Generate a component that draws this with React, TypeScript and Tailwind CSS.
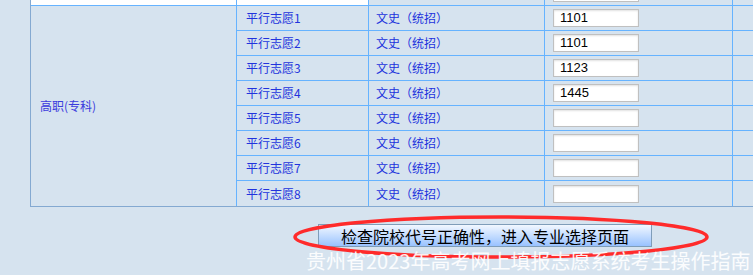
import React from "react";

const rows = [
  { name: "平行志愿1", value: "1101" },
  { name: "平行志愿2", value: "1101" },
  { name: "平行志愿3", value: "1123" },
  { name: "平行志愿4", value: "1445" },
  { name: "平行志愿5", value: "" },
  { name: "平行志愿6", value: "" },
  { name: "平行志愿7", value: "" },
  { name: "平行志愿8", value: "" },
];

const line = "border-[#66b3ff]";
const linkCls = "text-[12px] text-[#2233dd]";

export default function App() {
  return (
    <div className="relative w-[753px] h-[275px] overflow-hidden bg-[#d6e3ef] font-['Noto_Sans_CJK_SC',sans-serif]">
      <div className="ml-[30px] w-[760px] border-l border-[#84a9d1]">
        {/* tail of the previous row */}
        <div className={`flex h-[6px] border-b ${line}`}>
          <div className={`w-[206px] bg-white border-r ${line}`} />
          <div className={`w-[132px] bg-white border-r ${line}`} />
          <div className={`w-[176px] border-r ${line}`} />
          <div className={`w-[188px] pl-[8px] border-r ${line}`}>
            <div className="w-[86px] h-[2px] bg-white border-x border-b border-[#c0c0c0]" />
          </div>
          <div className="flex-1" />
        </div>

        <div className="flex border-b border-[#84a9d1]">
          <div className={`w-[206px] shrink-0 flex items-center pl-[9px] border-r ${line}`}>
            <span className="text-[12px] text-[#3b3bdd]">高职(专科)</span>
          </div>
          <div className="flex-1 flex flex-col">
            {rows.map((r, i) => (
              <div key={r.name} className={`flex h-[25px] ${i < rows.length - 1 ? `border-b ${line}` : "h-[24px]"}`}>
                <div className={`w-[132px] flex items-center pl-[9px] border-r ${line}`}>
                  <span className={linkCls}>{r.name}</span>
                </div>
                <div className={`w-[176px] flex items-center pl-[7px] border-r ${line}`}>
                  <span className={linkCls}>文史（统招）</span>
                </div>
                <div className={`w-[188px] flex items-center pl-[8px] border-r ${line}`}>
                  <input
                    defaultValue={r.value}
                    className="w-[86px] h-[18px] bg-white border border-[#c0c0c0] shadow-[inset_0_1px_2px_rgba(0,0,0,0.12)] px-[6px] text-[13px] text-black font-['Liberation_Sans',sans-serif] outline-none"
                  />
                </div>
                <div className="flex-1" />
              </div>
            ))}
          </div>
        </div>
      </div>

      <button className="mt-[17px] ml-[318px] w-[334px] h-[23px] border border-[#7f9db9] bg-gradient-to-b from-[#f2f7ff] to-[#99c2ff] text-[16px] leading-[20px] text-black">
        检查院校代号正确性，进入专业选择页面
      </button>

      <svg className="absolute inset-0 pointer-events-none" width="753" height="275">
        <ellipse cx="501" cy="237" rx="206" ry="20" fill="none" stroke="#ff2b2b" strokeWidth="3.5" />
      </svg>

      <div className="absolute left-[306px] top-[251px] text-[20px] leading-[20px] text-white/90 whitespace-nowrap">
        贵州省2023年高考网上填报志愿系统考生操作指南
      </div>
    </div>
  );
}
